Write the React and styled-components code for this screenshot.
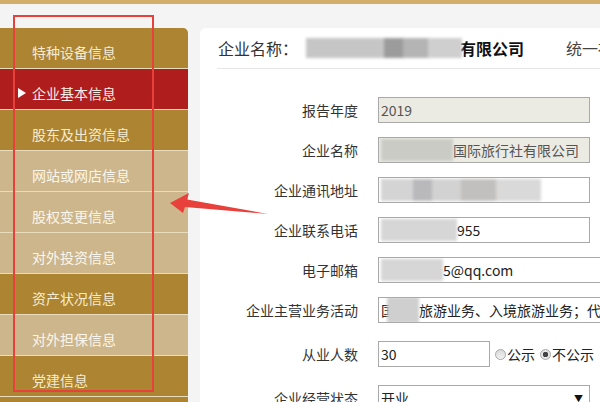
import styled, { createGlobalStyle } from 'styled-components'

const GlobalStyle = createGlobalStyle`
    html, body {
        margin: 0;
        padding: 0;
        width: 600px;
        height: 402px;
        overflow: hidden;
        background: #f4f4f4;
        font-family: "Noto Sans CJK SC", "Noto Sans", sans-serif;
    }
`

const Page = styled.div`
    position: relative;
    width: 600px;
    height: 402px;
    overflow: hidden;
`

const TopBar = styled.div`
    height: 4px;
    background: #d3ad6a;
`

const Main = styled.div`
    display: flex;
    gap: 12px;
    padding-top: 24px;
    height: 374px;
`

const Sidebar = styled.ul`
    list-style: none;
    margin: 0;
    padding: 0;
    width: 188px;
    flex-shrink: 0;
`

const tones = {
    dark: { bg: '#ad8431', color: '#f6ecd4' },
    light: { bg: '#cdb68b', color: '#fbf6ec' },
    active: { bg: '#b01d1d', color: '#fbefe6' },
}

const MenuItem = styled.li`
    position: relative;
    box-sizing: border-box;
    height: 41px;
    padding: 14px 0 0 32px;
    font-size: 14px;
    line-height: 20px;
    background: ${p => tones[p.$tone].bg};
    color: ${p => tones[p.$tone].color};
    border-bottom: 1px solid #e9dcbd;
    &:first-child {
        border-top-right-radius: 5px;
    }
`

const Pointer = styled.span`
    position: absolute;
    left: 18px;
    top: 19px;
    width: 0;
    height: 0;
    border-top: 5px solid transparent;
    border-bottom: 5px solid transparent;
    border-left: 8px solid #ffffff;
`

const Panel = styled.section`
    flex: 1;
    background: #ffffff;
    border-top-left-radius: 6px;
    overflow: hidden;
`

const Header = styled.div`
    display: flex;
    align-items: center;
    height: 40px;
    margin-left: 17px;
    padding-left: 1px;
    border-bottom: 1px solid #e6e6e6;
    font-size: 16px;
    color: #333;
    white-space: nowrap;
`

const Blur = styled.span`
    display: inline-block;
    flex-shrink: 0;
    width: ${p => p.$w}px;
    height: ${p => p.$h || 20}px;
    margin: 0 ${p => p.$mr || 0}px 0 ${p => p.$ml || 0}px;
    background: ${p => p.$bg || '#cccccc'};
    filter: blur(1.5px);
    vertical-align: middle;
`

const Strong = styled.span`
    font-weight: bold;
    color: #111;
`

const Unified = styled.span`
    margin-left: 42px;
    color: #444;
`

const Form = styled.div`
    padding-top: 28px;
`

const Row = styled.div`
    display: grid;
    grid-template-columns: 158px auto;
    column-gap: 20px;
    align-items: center;
    margin-bottom: ${p => p.$gap}px;
`

const Label = styled.span`
    text-align: right;
    font-size: 14px;
    color: #333;
`

const Field = styled.div`
    display: flex;
    align-items: center;
    box-sizing: border-box;
    width: ${p => p.$w || 212}px;
    height: 26px;
    padding: 0 2px;
    border: 1px solid #a9a9a9;
    background: ${p => (p.$disabled ? '#ebebe4' : '#ffffff')};
    color: ${p => (p.$disabled ? '#555' : '#222')};
    font-size: 14px;
    white-space: nowrap;
    overflow: hidden;
`

const Inline = styled.div`
    display: flex;
    align-items: center;
`

const Radio = styled.span`
    display: inline-block;
    box-sizing: border-box;
    width: 11px;
    height: 11px;
    margin: 0 1px 0 5px;
    border-radius: 50%;
    border: 1px solid #a8a8a8;
    background: ${p =>
        p.$checked
            ? 'radial-gradient(circle, #444 0 2.5px, #e6e6e6 3px)'
            : 'linear-gradient(#d9d9d9, #f2f2f2)'};
`

const RadioText = styled.span`
    font-size: 14px;
    color: #222;
`

const Select = styled(Field)`
    justify-content: space-between;
    padding-right: 6px;
`

const Caret = styled.span`
    font-size: 9px;
    color: #111;
`

const Frame = styled.div`
    position: absolute;
    left: 13px;
    top: 15px;
    width: 141px;
    height: 377px;
    box-sizing: border-box;
    border: 2.5px solid #e8403a;
    pointer-events: none;
`

const ArrowSvg = styled.svg`
    position: absolute;
    left: 0;
    top: 0;
    pointer-events: none;
`

const menu = [
    ['特种设备信息', 'dark'],
    ['企业基本信息', 'active'],
    ['股东及出资信息', 'dark'],
    ['网站或网店信息', 'light'],
    ['股权变更信息', 'light'],
    ['对外投资信息', 'light'],
    ['资产状况信息', 'dark'],
    ['对外担保信息', 'light'],
    ['党建信息', 'dark'],
    ['', 'dark'],
]

export default function App() {
    return (
        <Page>
            <GlobalStyle />
            <TopBar />
            <Main>
                <Sidebar>
                    {menu.map(([text, tone], i) => (
                        <MenuItem key={i} $tone={tone}>
                            {tone === 'active' && <Pointer />}
                            {text}
                        </MenuItem>
                    ))}
                </Sidebar>
                <Panel>
                    <Header>
                        企业名称：
                        <Blur
                            $w={156}
                            $ml={8}
                            $mr={-2}
                            $bg="linear-gradient(90deg, #c6c6c6 0 50%, #9c9c9c 50% 62%, #b4b4b4 62% 78%, #cfcfcf 78%)"
                        />
                        <Strong>有限公司</Strong>
                        <Unified>统一社会信用代码</Unified>
                    </Header>
                    <Form>
                        <Row $gap={14}>
                            <Label>报告年度</Label>
                            <Field $disabled>2019</Field>
                        </Row>
                        <Row $gap={14}>
                            <Label>企业名称</Label>
                            <Field $disabled>
                                <Blur $w={72} $h={22} $bg="#cbcbc6" />
                                国际旅行社有限公司
                            </Field>
                        </Row>
                        <Row $gap={14}>
                            <Label>企业通讯地址</Label>
                            <Field>
                                <Blur
                                    $w={160}
                                    $h={22}
                                    $bg="linear-gradient(90deg, #d4d4d4 0 20%, #b9b9bc 20% 32%, #d2d2d2 32% 50%, #c2c0be 50% 72%, #d9d9d9 72%)"
                                />
                            </Field>
                        </Row>
                        <Row $gap={14}>
                            <Label>企业联系电话</Label>
                            <Field>
                                <Blur $w={76} $h={22} $bg="#d6d6d6" />
                                955
                            </Field>
                        </Row>
                        <Row $gap={14}>
                            <Label>电子邮箱</Label>
                            <Field $w={240}>
                                <Blur $w={62} $h={22} $bg="#d6d6d6" />
                                5@qq.com
                            </Field>
                        </Row>
                        <Row $gap={18}>
                            <Label>企业主营业务活动</Label>
                            <Field $w={240}>
                                国
                                <Blur $w={32} $h={26} $ml={-8} $bg="#cfcfcf" />
                                旅游业务、入境旅游业务；代售
                            </Field>
                        </Row>
                        <Row $gap={18}>
                            <Label>从业人数</Label>
                            <Inline>
                                <Field $w={112}>30</Field>
                                <Radio />
                                <RadioText>公示</RadioText>
                                <Radio $checked />
                                <RadioText>不公示</RadioText>
                            </Inline>
                        </Row>
                        <Row $gap={0}>
                            <Label>企业经营状态</Label>
                            <Select>
                                开业
                                <Caret>▼</Caret>
                            </Select>
                        </Row>
                    </Form>
                </Panel>
            </Main>
            <Frame />
            <ArrowSvg width="600" height="402" viewBox="0 0 600 402">
                <polygon
                    points="170,203 189,193 187,199.5 268,214 185,207 183,213"
                    fill="#e8403a"
                />
            </ArrowSvg>
        </Page>
    )
}
